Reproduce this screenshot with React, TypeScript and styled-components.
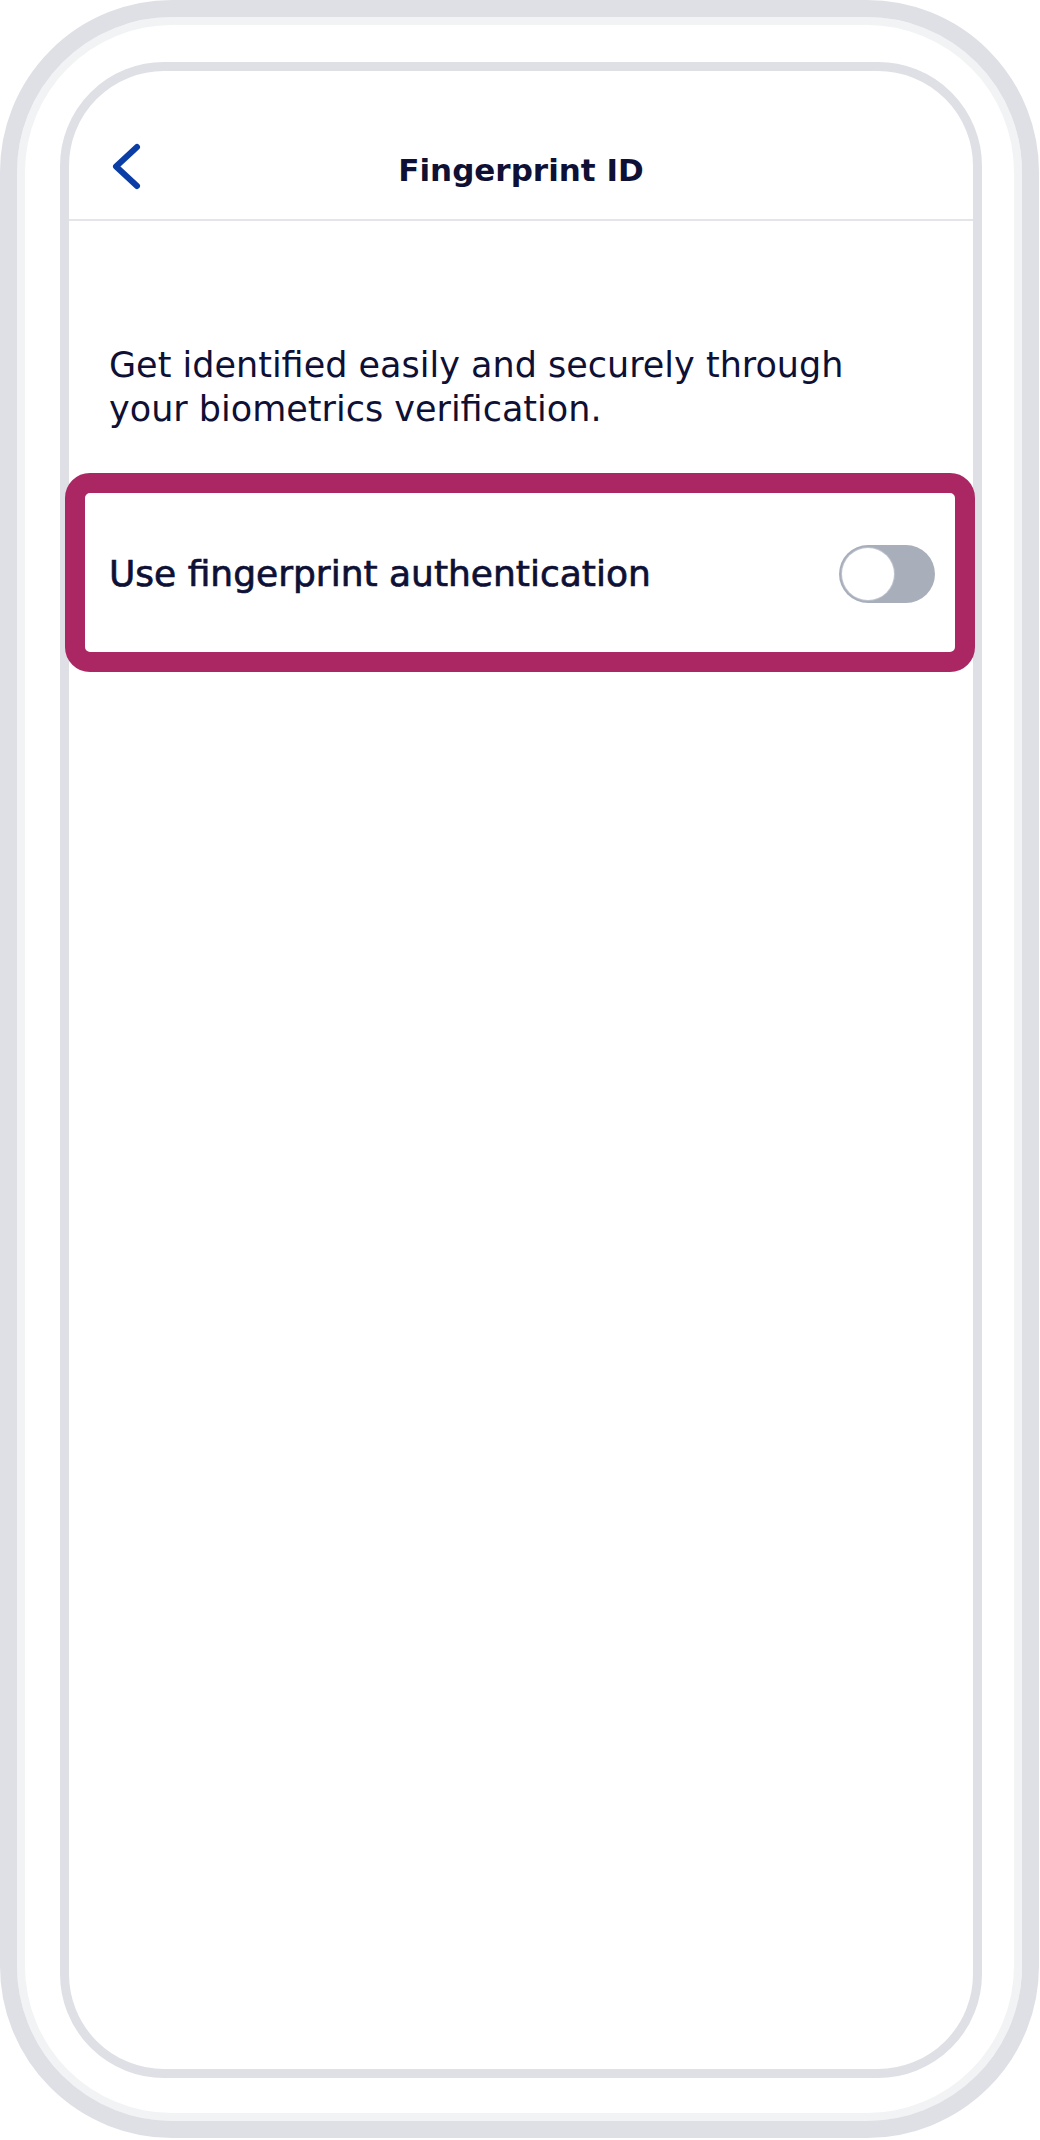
import React, { useState } from 'react'
import styled, { createGlobalStyle } from 'styled-components'

const GlobalStyle = createGlobalStyle`
  html, body {
    margin: 0;
    padding: 0;
    background: #ffffff;
  }
  body {
    font-family: "DejaVu Sans", "Noto Sans", sans-serif;
    color: #0e1035;
  }
`

const Device = styled.div`
  box-sizing: border-box;
  width: 1039px;
  height: 2138px;
  border: 17px solid #dfe0e5;
  border-radius: 172px;
  box-shadow: inset 0 0 0 8px #f2f3f5;
  padding: 45px 40px 43px 43px;
  display: flex;
`

const Screen = styled.div`
  flex: 1;
  display: flex;
  flex-direction: column;
  border: 9px solid #dfe0e5;
  border-radius: 104px;
  background: #ffffff;
`

const Header = styled.header`
  display: grid;
  grid-template-columns: 1fr auto 1fr;
  align-items: center;
  height: 150px;
  box-sizing: border-box;
  padding-top: 44px;
  border-bottom: 2px solid #e4e5ea;
`

const BackButton = styled.button`
  justify-self: start;
  margin-left: 41px;
  padding: 0;
  border: none;
  background: transparent;
  display: flex;
  cursor: pointer;
`

const Title = styled.h1`
  margin: 8px 0 0 0;
  font-size: 31px;
  line-height: 1.2;
  font-weight: 700;
  color: #0e1035;
`

const Description = styled.p`
  margin: 122px 60px 0 40px;
  font-size: 35px;
  line-height: 44px;
  font-weight: 400;
  color: #0e1035;
`

const SettingCard = styled.div`
  margin: 42px -2px 0 -4px;
  height: 199px;
  box-sizing: border-box;
  border: 20px solid #aa2763;
  border-radius: 25px;
  background: #ffffff;
  display: flex;
  align-items: center;
  justify-content: space-between;
  padding: 2px 20px 0 24px;
`

const SettingLabel = styled.span`
  font-size: 36px;
  font-weight: 400;
  -webkit-text-stroke: 0.7px #0e1035;
  color: #0e1035;
`

const Track = styled.button<{ on: boolean }>`
  width: 96px;
  height: 58px;
  border: none;
  border-radius: 29px;
  padding: 3px;
  box-sizing: border-box;
  background: ${({ on }) => (on ? '#0a3ea6' : '#a8afbb')};
  display: flex;
  justify-content: ${({ on }) => (on ? 'flex-end' : 'flex-start')};
  cursor: pointer;
`

const Knob = styled.span`
  width: 52px;
  height: 52px;
  border-radius: 50%;
  background: #ffffff;
  box-shadow: 0 0 0 1px #bfc4cd;
`

function ChevronLeft() {
  return (
    <svg width="32" height="50" viewBox="0 0 32 50" fill="none">
      <path d="M27 5 L6 24.5 L27 44" stroke="#0a3ea6" strokeWidth="6" strokeLinecap="round" strokeLinejoin="round" />
    </svg>
  )
}

export default function App() {
  const [enabled, setEnabled] = useState(false)

  return (
    <>
      <GlobalStyle />
      <Device>
        <Screen>
          <Header>
            <BackButton aria-label="Back">
              <ChevronLeft />
            </BackButton>
            <Title>Fingerprint ID</Title>
            <span />
          </Header>
          <Description>
            Get identified easily and securely through your biometrics verification.
          </Description>
          <SettingCard>
            <SettingLabel>Use fingerprint authentication</SettingLabel>
            <Track on={enabled} onClick={() => setEnabled(!enabled)} aria-label="Toggle fingerprint">
              <Knob />
            </Track>
          </SettingCard>
        </Screen>
      </Device>
    </>
  )
}
